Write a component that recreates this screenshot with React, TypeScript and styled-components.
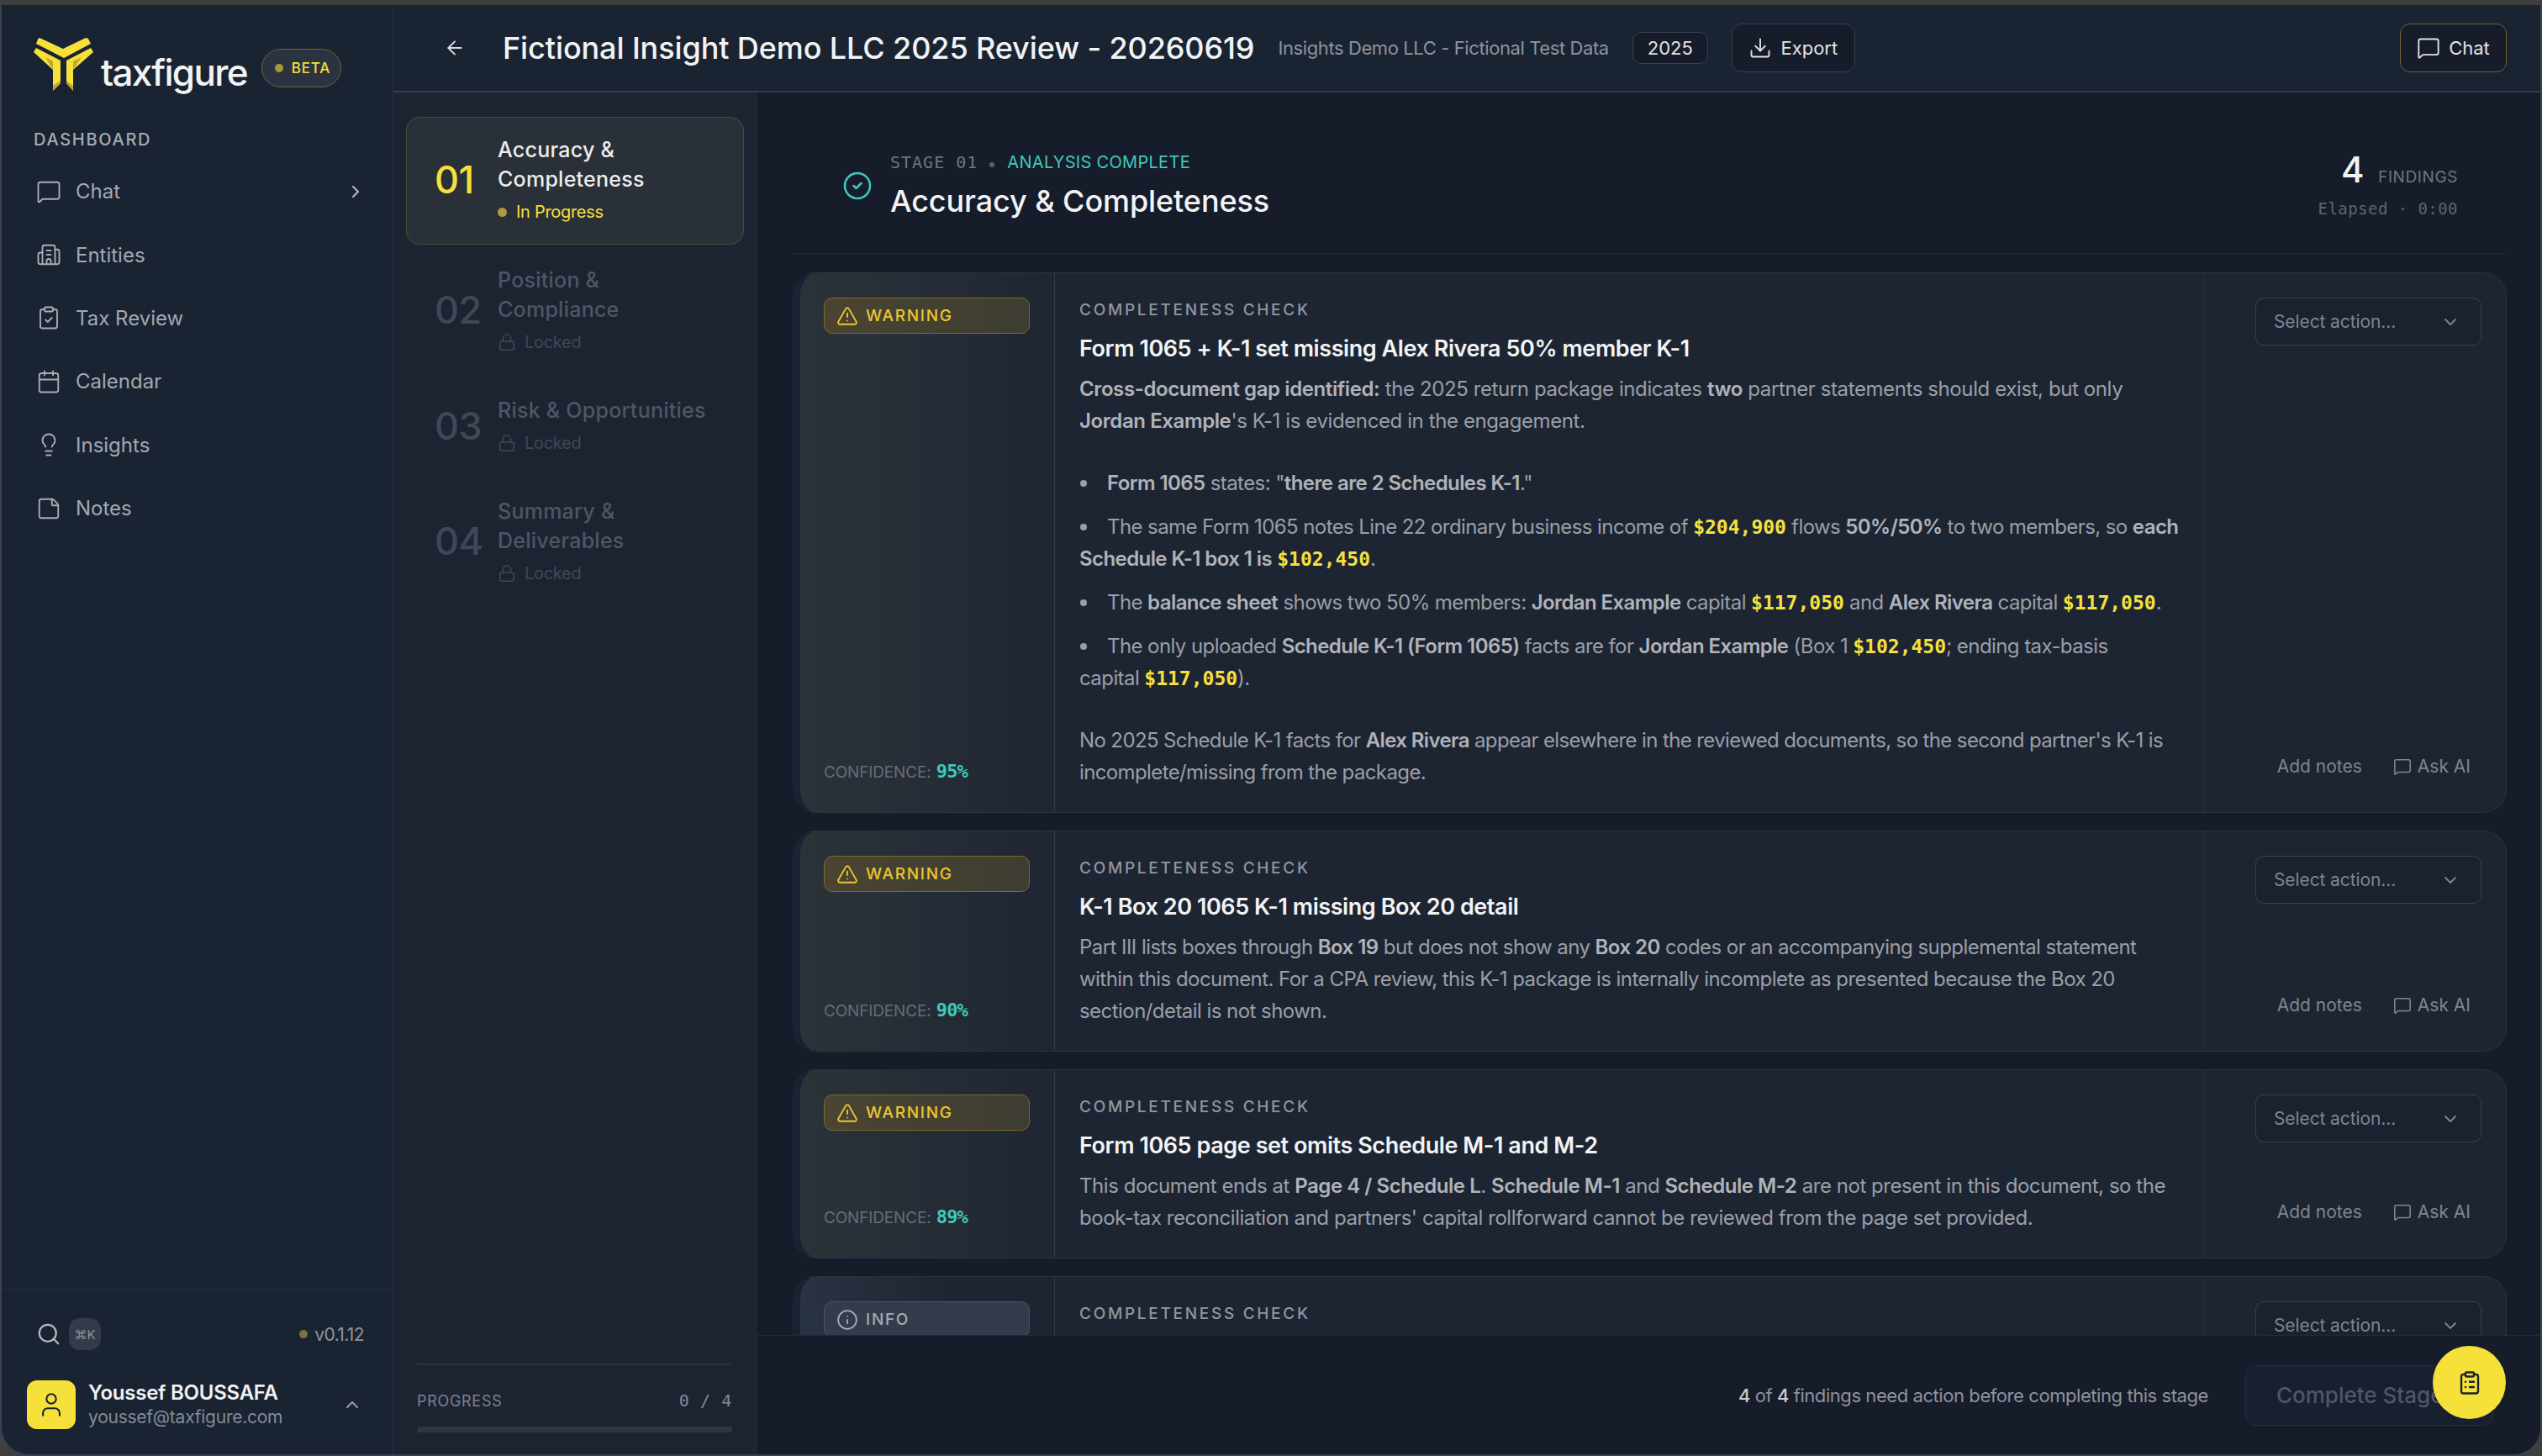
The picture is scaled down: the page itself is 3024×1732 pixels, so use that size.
import React from 'react';
import styled, { createGlobalStyle } from 'styled-components';
import {
  ArrowLeft,
  Building2,
  Calendar,
  ChevronDown,
  ChevronRight,
  ChevronUp,
  CircleCheck,
  ClipboardCheck,
  ClipboardList,
  Download,
  Info,
  Lightbulb,
  Lock,
  MessageSquare,
  Search,
  StickyNote,
  TriangleAlert,
  User,
} from 'lucide-react';

const sans = `Inter, "Liberation Sans", sans-serif`;
const mono = `"DejaVu Sans Mono", "Liberation Mono", monospace`;

const GlobalStyle = createGlobalStyle`
  html, body {
    margin: 0;
    padding: 0;
    background: #3f3f3f;
  }
  * {
    box-sizing: border-box;
  }
  body {
    font-family: ${sans};
    -webkit-font-smoothing: antialiased;
  }
`;

const navItems = [
  { label: 'Chat', icon: MessageSquare, more: true },
  { label: 'Entities', icon: Building2 },
  { label: 'Tax Review', icon: ClipboardCheck },
  { label: 'Calendar', icon: Calendar },
  { label: 'Insights', icon: Lightbulb },
  { label: 'Notes', icon: StickyNote },
];

const stages = [
  { num: '01', title: ['Accuracy &', 'Completeness'], active: true },
  { num: '02', title: ['Position &', 'Compliance'] },
  { num: '03', title: ['Risk & Opportunities'] },
  { num: '04', title: ['Summary &', 'Deliverables'] },
];

const LogoMark = styled.svg`
  flex-shrink: 0;
  margin-bottom: 14px;
`;

const Logo = () => (
  <LogoMark width="71" height="64" viewBox="0 0 71 64">
    <path d="M7 1 L35 14 L62 1 Q65 1 66 4 L68 8 L36 25 L3 8 L5 3 Q6 1 7 1 Z" fill="#f6e03a" />
    <path d="M0 18 L3 13 L32 28 L32 55 L23 64 L23 39 Z" fill="#f6e03a" />
    <path d="M71 18 L68 13 L39 28 L39 55 L47 64 L47 39 Z" fill="#f6e03a" />
    <path d="M14 24 L23 29 L23 39 Z M23 64 L23 58 L32 52 L32 55 Z" fill="#c4a52e" />
    <path d="M57 24 L47 29 L47 39 Z M47 64 L47 58 L39 52 L39 55 Z" fill="#c4a52e" />
  </LogoMark>
);

const Money = styled.span`
  font-family: ${mono};
  font-weight: 700;
  font-size: 23px;
  line-height: 0;
  letter-spacing: 0;
  color: #f7e03c;
`;

const App: React.FC<{}> = () => {
  return (
    <>
      <GlobalStyle />
      <TopStrip />
      <Shell>
        <Sidebar>
          <Brand>
            <Logo />
            <BrandName>taxfigure</BrandName>
            <BetaPill>
              <PillDot />
              BETA
            </BetaPill>
          </Brand>
          <NavLabel>DASHBOARD</NavLabel>
          <Nav>
            {navItems.map((item) => (
              <NavItem key={item.label}>
                <NavIcon>
                  <item.icon size={30} strokeWidth={1.5} />
                </NavIcon>
                {item.label}
                {item.more && (
                  <NavMore>
                    <ChevronRight size={24} strokeWidth={2} />
                  </NavMore>
                )}
              </NavItem>
            ))}
          </Nav>
          <SideFooter>
            <SearchRow>
              <Search size={30} strokeWidth={1.8} color="#b4b8bf" />
              <KeyHint>⌘K</KeyHint>
              <Version>
                <VersionDot />
                v0.1.12
              </Version>
            </SearchRow>
            <UserRow>
              <Avatar>
                <User size={34} strokeWidth={1.5} color="#1a2332" />
              </Avatar>
              <UserText>
                <UserName>Youssef BOUSSAFA</UserName>
                <UserMail>youssef@taxfigure.com</UserMail>
              </UserText>
              <ChevronUp size={24} strokeWidth={2} color="#9a9fa8" />
            </UserRow>
          </SideFooter>
        </Sidebar>

        <Content>
          <Header>
            <BackButton>
              <ArrowLeft size={26} strokeWidth={1.8} />
            </BackButton>
            <PageTitle>Fictional Insight Demo LLC 2025 Review - 20260619</PageTitle>
            <PageSub>Insights Demo LLC - Fictional Test Data</PageSub>
            <YearTag>2025</YearTag>
            <HeadButton>
              <Download size={28} strokeWidth={1.6} />
              Export
            </HeadButton>
            <ChatButton>
              <MessageSquare size={28} strokeWidth={1.6} />
              Chat
            </ChatButton>
          </Header>

          <Body>
            <Rail>
              <StageList>
                {stages.map((s) => (
                  <StageItem key={s.num} $active={s.active}>
                    <StageNum $active={s.active}>{s.num}</StageNum>
                    <div>
                      {s.title.map((line) => (
                        <StageTitle key={line} $active={s.active}>
                          {line}
                        </StageTitle>
                      ))}
                      {s.active ? (
                        <StageStatus $active>
                          <StatusDot />
                          In Progress
                        </StageStatus>
                      ) : (
                        <StageStatus>
                          <Lock size={22} strokeWidth={1.6} />
                          Locked
                        </StageStatus>
                      )}
                    </div>
                  </StageItem>
                ))}
              </StageList>
              <Progress>
                <ProgressHead>
                  <span>PROGRESS</span>
                  <ProgressCount>0 / 4</ProgressCount>
                </ProgressHead>
                <ProgressBar />
              </Progress>
            </Rail>

            <Main>
              <Scroller>
                <StageHead>
                  <CircleCheck size={36} strokeWidth={1.7} color="#3fc9bb" />
                  <StageHeadText>
                    <StageMeta>
                      STAGE 01
                      <MetaDot />
                      <MetaDone>ANALYSIS COMPLETE</MetaDone>
                    </StageMeta>
                    <StageHeading>Accuracy &amp; Completeness</StageHeading>
                  </StageHeadText>
                  <StageStats>
                    <Findings>
                      <FindingsNum>4</FindingsNum>
                      FINDINGS
                    </Findings>
                    <Elapsed>Elapsed · 0:00</Elapsed>
                  </StageStats>
                </StageHead>

                <Cards>
                  <FindingCard
                    confidence="95%"
                    title="Form 1065 + K-1 set missing Alex Rivera 50% member K-1"
                  >
                    <Para>
                      <b>Cross-document gap identified:</b> the 2025 return package indicates <b>two</b> partner
                      statements should exist, but only
                      <br />
                      <b>Jordan Example</b>'s K-1 is evidenced in the engagement.
                    </Para>
                    <Bullets>
                      <li>
                        <b>Form 1065</b> states: "<b>there are 2 Schedules K-1</b>."
                      </li>
                      <li>
                        The same Form 1065 notes Line 22 ordinary business income of <Money>$204,900</Money> flows{' '}
                        <b>50%/50%</b> to two members, so <b>each</b>
                        <br />
                        <b>Schedule K-1 box 1 is</b> <Money>$102,450</Money>.
                      </li>
                      <li>
                        The <b>balance sheet</b> shows two 50% members: <b>Jordan Example</b> capital{' '}
                        <Money>$117,050</Money> and <b>Alex Rivera</b> capital <Money>$117,050</Money>.
                      </li>
                      <li>
                        The only uploaded <b>Schedule K-1 (Form 1065)</b> facts are for <b>Jordan Example</b> (Box 1{' '}
                        <Money>$102,450</Money>; ending tax-basis
                        <br />
                        capital <Money>$117,050</Money>).
                      </li>
                    </Bullets>
                    <Para $track={-0.62}>
                      No 2025 Schedule K-1 facts for <b>Alex Rivera</b> appear elsewhere in the reviewed documents, so
                      the second partner's K-1 is
                      <br />
                      incomplete/missing from the package.
                    </Para>
                  </FindingCard>

                  <FindingCard confidence="90%" title="K-1 Box 20 1065 K-1 missing Box 20 detail">
                    <Para $track={-0.55}>
                      Part III lists boxes through <b>Box 19</b> but does not show any <b>Box 20</b> codes or an
                      accompanying supplemental statement
                      <br />
                      within this document. For a CPA review, this K-1 package is internally incomplete as presented
                      because the Box 20
                      <br />
                      section/detail is not shown.
                    </Para>
                  </FindingCard>

                  <FindingCard confidence="89%" title="Form 1065 page set omits Schedule M-1 and M-2">
                    <Para $track={-0.45}>
                      This document ends at <b>Page 4 / Schedule L</b>. <b>Schedule M-1</b> and <b>Schedule M-2</b> are
                      not present in this document, so the
                      <br />
                      book-tax reconciliation and partners' capital rollforward cannot be reviewed from the page set
                      provided.
                    </Para>
                  </FindingCard>

                  <FindingCard level="info" />
                </Cards>
              </Scroller>

              <Footer>
                <FooterNote>
                  <em>4</em> of <em>4</em> findings need action before completing this stage
                </FooterNote>
                <CompleteButton>Complete Stage</CompleteButton>
              </Footer>
              <Fab>
                <ClipboardList size={30} strokeWidth={1.9} />
              </Fab>
            </Main>
          </Body>
        </Content>
      </Shell>
    </>
  );
};

// the last card runs under the footer, only its top shows
const FindingCard: React.FC<{
  level?: 'warning' | 'info';
  confidence?: string;
  title?: string;
  children?: React.ReactNode;
}> = ({ level = 'warning', confidence, title, children }) => (
  <Card>
    <CardSide $level={level}>
      <Badge $level={level}>
        {level === 'warning' ? (
          <TriangleAlert size={26} strokeWidth={1.7} />
        ) : (
          <Info size={26} strokeWidth={1.7} />
        )}
        {level === 'warning' ? 'WARNING' : 'INFO'}
      </Badge>
      {confidence && (
        <Confidence>
          CONFIDENCE: <ConfidenceValue>{confidence}</ConfidenceValue>
        </Confidence>
      )}
    </CardSide>
    <CardMain>
      <Kicker>COMPLETENESS CHECK</Kicker>
      {title && <CardTitle>{title}</CardTitle>}
      {children}
    </CardMain>
    <CardActions>
      <ActionSelect>
        Select action...
        <ChevronDown size={24} strokeWidth={1.8} />
      </ActionSelect>
      {title && (
        <ActionLinks>
          <span>Add notes</span>
          <AskAi>
            <MessageSquare size={22} strokeWidth={1.7} />
            Ask AI
          </AskAi>
        </ActionLinks>
      )}
    </CardActions>
  </Card>
);

export default App;

const TopStrip = styled.div`
  height: 6px;
  background: #3f3f3f;
`;

const Shell = styled.div`
  display: flex;
  height: 1726px;
  overflow: hidden;
  background: #1a2332;
  border: 2px solid #3a4250;
  border-top: none;
  border-radius: 0 0 34px 34px;
`;

const Sidebar = styled.aside`
  display: flex;
  flex-direction: column;
  flex: 0 0 466px;
  border-right: 1px solid #262f3e;
`;

const Brand = styled.div`
  display: flex;
  align-items: center;
  padding: 44px 0 0 38px;
  height: 110px;
`;

const BrandName = styled.div`
  margin: 6px 0 0 9px;
  font-size: 44px;
  font-weight: 500;
  letter-spacing: -1.7px;
  color: #f2f3f4;
`;

const BetaPill = styled.div`
  display: flex;
  align-items: center;
  gap: 10px;
  width: 95px;
  height: 46px;
  margin: 0 0 4px 17px;
  padding-left: 15px;
  border: 1px solid #6b6238;
  border-radius: 23px;
  background: #2c3340;
  font-size: 17px;
  font-weight: 500;
  letter-spacing: 0.8px;
  color: #f6e03a;
`;

const PillDot = styled.span`
  width: 10px;
  height: 10px;
  border-radius: 50%;
  background: #a8983c;
`;

const NavLabel = styled.div`
  margin: 35px 0 0 38px;
  font-size: 20px;
  font-weight: 500;
  letter-spacing: 1.7px;
  line-height: 30px;
  color: #a6abb3;
`;

const Nav = styled.nav`
  display: flex;
  flex-direction: column;
  margin-top: 9px;
  padding: 0 32px 0 41px;
`;

const NavItem = styled.div`
  display: flex;
  align-items: center;
  height: 75.4px;
  font-size: 24px;
  color: #a4a9b1;
`;

const NavIcon = styled.span`
  display: flex;
  justify-content: center;
  width: 30px;
  margin-right: 17px;
  color: #a9adb5;
`;

const NavMore = styled.span`
  display: flex;
  margin-left: auto;
  color: #b9bcc3;
`;

const SideFooter = styled.div`
  margin-top: auto;
  padding: 32px 34px 30px 28px;
  border-top: 1px solid #262f3e;
`;

const SearchRow = styled.div`
  display: flex;
  align-items: center;
  gap: 9px;
  padding-left: 13px;
  height: 40px;
`;

const KeyHint = styled.span`
  display: flex;
  align-items: center;
  justify-content: center;
  width: 38px;
  height: 38px;
  border-radius: 13px;
  background: #343b48;
  font-size: 15px;
  color: #8e939c;
`;

const Version = styled.span`
  display: flex;
  align-items: center;
  gap: 8px;
  margin-left: auto;
  font-size: 21px;
  letter-spacing: -0.6px;
  color: #8f949d;
`;

const VersionDot = styled.span`
  width: 10px;
  height: 10px;
  border-radius: 50%;
  background: #80723a;
`;

const UserRow = styled.div`
  display: flex;
  align-items: center;
  gap: 15px;
  margin-top: 35px;
  padding-left: 2px;
  padding-right: 2px;
`;

const Avatar = styled.div`
  display: flex;
  align-items: center;
  justify-content: center;
  width: 58px;
  height: 58px;
  border-radius: 12px;
  background: #f6e03a;
`;

const UserText = styled.div`
  flex: 1;
`;

const UserName = styled.div`
  font-size: 24px;
  font-weight: 600;
  line-height: 30px;
  letter-spacing: -0.25px;
  color: #f1f2f3;
`;

const UserMail = styled.div`
  font-size: 21px;
  line-height: 28px;
  letter-spacing: -0.25px;
  color: #858b95;
`;

const Content = styled.div`
  display: flex;
  flex-direction: column;
  flex: 1;
  min-width: 0;
`;

const Header = styled.header`
  display: flex;
  align-items: center;
  flex: 0 0 104px;
  padding: 0 40px 0 60px;
  border-bottom: 2px solid #333c4a;
`;

const BackButton = styled.span`
  display: flex;
  margin-right: 44px;
  color: #d9dbde;
`;

const PageTitle = styled.h1`
  margin: 0;
  font-size: 36px;
  font-weight: 500;
  letter-spacing: -0.1px;
  white-space: nowrap;
  color: #f2f3f4;
`;

const PageSub = styled.span`
  margin-left: 28px;
  font-size: 22px;
  white-space: nowrap;
  letter-spacing: -0.4px;
  color: #8f949d;
`;

const YearTag = styled.span`
  display: flex;
  align-items: center;
  justify-content: center;
  width: 90px;
  height: 38px;
  margin-left: 28px;
  border: 1px solid #39424f;
  border-radius: 10px;
  background: #161c2a;
  font-size: 22px;
  color: #e2e3e6;
`;

const HeadButton = styled.button`
  display: flex;
  align-items: center;
  justify-content: center;
  gap: 10px;
  width: 147px;
  height: 58px;
  margin-left: 28px;
  padding: 0;
  border: 1px solid #39424f;
  border-radius: 12px;
  background: #161c2a;
  font-family: ${sans};
  font-size: 22px;
  color: #e2e3e6;
`;

const ChatButton = styled(HeadButton)`
  width: 127px;
  margin-left: auto;
  border-color: #6f6236;
`;

const Body = styled.div`
  display: flex;
  flex: 1;
  min-height: 0;
`;

const Rail = styled.div`
  display: flex;
  flex-direction: column;
  flex: 0 0 432px;
  padding: 29px 14px 0 15px;
  background: #1c2432;
  border-right: 1px solid #262f3e;
`;

const StageList = styled.div`
  display: flex;
  flex-direction: column;
  gap: 3px;
`;

const StageItem = styled.div<{ $active?: boolean }>`
  display: flex;
  align-items: center;
  gap: 24px;
  padding: 21px 20px 24px 33px;
  border: 1px solid ${(p) => (p.$active ? '#4d4c3a' : 'transparent')};
  border-radius: 16px;
  background: ${(p) => (p.$active ? '#2a3038' : 'transparent')};
`;

const StageNum = styled.div<{ $active?: boolean }>`
  width: 51px;
  font-size: 45px;
  font-weight: 500;
  letter-spacing: -0.5px;
  color: ${(p) => (p.$active ? '#f7e03c' : '#404756')};
`;

const StageTitle = styled.div<{ $active?: boolean }>`
  font-size: 25px;
  font-weight: 500;
  line-height: 35px;
  letter-spacing: 0.25px;
  white-space: nowrap;
  color: ${(p) => (p.$active ? '#eceded' : '#4f5664')};
`;

const StageStatus = styled.div<{ $active?: boolean }>`
  display: flex;
  align-items: center;
  gap: ${(p) => (p.$active ? '11px' : '10px')};
  height: 28px;
  margin-top: 7px;
  font-size: 20px;
  letter-spacing: -0.3px;
  color: ${(p) => (p.$active ? '#f7e03c' : '#414857')};
`;

const StatusDot = styled.span`
  width: 11px;
  height: 11px;
  border-radius: 50%;
  background: #ab9c3c;
`;

const Progress = styled.div`
  margin: auto 14px 0 13px;
  padding-top: 30px;
  height: 108px;
  border-top: 2px solid #2a3240;
`;

const ProgressHead = styled.div`
  display: flex;
  justify-content: space-between;
  align-items: center;
  font-size: 18px;
  letter-spacing: 0.7px;
  color: #7b818c;
`;

const ProgressCount = styled.span`
  font-family: ${mono};
  font-size: 20px;
  letter-spacing: 0.6px;
  color: #868b95;
`;

const ProgressBar = styled.div`
  height: 7px;
  margin-top: 19px;
  border-radius: 4px;
  background: #2f3744;
`;

const Main = styled.main`
  position: relative;
  display: flex;
  flex-direction: column;
  flex: 1;
  min-width: 0;
  background: #161c2a;
`;

const Scroller = styled.div`
  flex: 1;
  min-height: 0;
  overflow: hidden;
  padding: 0 40px 0 43px;
`;

const StageHead = styled.div`
  display: flex;
  align-items: center;
  gap: 21px;
  height: 192px;
  padding: 30px 58px 0 59px;
  border-bottom: 1px solid #232b3a;
`;

const StageHeadText = styled.div`
  flex: 1;
`;

const StageMeta = styled.div`
  display: flex;
  align-items: center;
  font-family: ${mono};
  font-size: 20px;
  line-height: 28px;
  letter-spacing: 1px;
  color: #6f7580;
`;

const MetaDot = styled.span`
  width: 6px;
  height: 6px;
  margin: 6px 15px 0 14px;
  border-radius: 50%;
  background: #596070;
`;

const MetaDone = styled.span`
  font-family: ${sans};
  font-size: 20px;
  letter-spacing: 0.3px;
  color: #3fc9bb;
`;

const StageHeading = styled.h2`
  margin: 8px 0 0;
  font-size: 36px;
  font-weight: 500;
  line-height: 48px;
  letter-spacing: -0.1px;
  color: #f2f3f4;
`;

const StageStats = styled.div`
  display: flex;
  flex-direction: column;
  align-items: flex-end;
  margin-top: -6px;
`;

const Findings = styled.div`
  display: flex;
  align-items: baseline;
  gap: 16px;
  font-size: 19px;
  letter-spacing: 0.6px;
  color: #6f7580;
`;

const FindingsNum = styled.span`
  font-size: 42px;
  font-weight: 500;
  color: #f2f3f4;
`;

const Elapsed = styled.div`
  margin-top: 10px;
  font-family: ${mono};
  font-size: 19px;
  letter-spacing: 0.45px;
  color: #5f6571;
`;

const Cards = styled.div`
  display: flex;
  flex-direction: column;
  gap: 21px;
  padding-top: 22px;
`;

const Card = styled.section`
  display: grid;
  grid-template-columns: 303px 1fr 359px;
  border: 1px solid #2b3341;
  border-left: 9px solid #1b2332;
  border-radius: 28px;
  background: #1e2532;
  overflow: hidden;
  flex-shrink: 0;
`;

const CardSide = styled.div<{ $level: string }>`
  display: flex;
  flex-direction: column;
  justify-content: space-between;
  padding: 29px 29px 33px 28px;
  background: ${(p) =>
    p.$level === 'info'
      ? 'linear-gradient(90deg, #2a3342 0%, #1e2532 60%)'
      : 'linear-gradient(90deg, #2b3339 0%, #1f2633 100%)'};
  border-right: 1px solid #323a48;
`;

const Badge = styled.div<{ $level: string }>`
  display: flex;
  align-items: center;
  gap: 9px;
  height: 43px;
  padding-left: 14px;
  border: 1px solid ${(p) => (p.$level === 'info' ? '#4a5362' : '#7a6a2c')};
  border-radius: 10px;
  background: ${(p) => (p.$level === 'info' ? '#343c4b' : 'linear-gradient(90deg, #4a4431, #3e3d33)')};
  font-size: 19px;
  font-weight: 500;
  letter-spacing: 1.7px;
  color: ${(p) => (p.$level === 'info' ? '#a6abb3' : '#eec72e')};
`;

const Confidence = styled.div`
  font-size: 19px;
  line-height: 28px;
  letter-spacing: -0.15px;
  color: #666c78;
`;

const ConfidenceValue = styled.span`
  margin-left: 1px;
  font-family: ${mono};
  font-size: 22px;
  font-weight: 700;
  line-height: 0;
  letter-spacing: -0.9px;
  color: #3fc9bb;
`;

const CardMain = styled.div`
  padding: 30px 30px 28px 29px;
  white-space: nowrap;
  min-width: 0;
`;

const Kicker = styled.div`
  font-size: 19px;
  font-weight: 500;
  line-height: 28px;
  letter-spacing: 2.7px;
  color: #9196a0;
`;

const CardTitle = styled.h3`
  margin: 14px 0 11px;
  font-size: 27px;
  font-weight: 600;
  line-height: 36px;
  letter-spacing: -0.43px;
  color: #f2f3f4;
`;

const Para = styled.p<{ $track?: number }>`
  margin: 0;
  font-size: 24px;
  line-height: 38px;
  letter-spacing: ${(p) => p.$track ?? -0.4}px;
  color: #9a9fa7;

  b {
    font-weight: 600;
    color: #b0b3ba;
  }
`;

const Bullets = styled.ul`
  display: flex;
  flex-direction: column;
  gap: 14px;
  margin: 36px 0;
  padding: 0;
  list-style: none;
  font-size: 24px;
  line-height: 38px;
  letter-spacing: -0.58px;
  color: #9a9fa7;

  b {
    font-weight: 600;
    color: #b0b3ba;
  }

  li::before {
    content: '';
    display: inline-block;
    width: 8px;
    height: 8px;
    margin: 0 24px 4px 1px;
    border-radius: 50%;
    background: #9a9fa7;
  }
`;

const CardActions = styled.div`
  display: flex;
  flex-direction: column;
  justify-content: space-between;
  padding: 29px 29px 40px 60px;
  border-left: 1px solid #262e3b;
`;

const ActionSelect = styled.div`
  display: flex;
  align-items: center;
  justify-content: space-between;
  height: 57px;
  padding: 0 24px 0 21px;
  border: 1px solid #39424f;
  border-radius: 10px;
  background: #1a2230;
  font-size: 21px;
  letter-spacing: -0.1px;
  color: #7f858f;
`;

const ActionLinks = styled.div`
  display: flex;
  align-items: center;
  justify-content: flex-end;
  gap: 37px;
  padding-right: 13px;
  line-height: 28px;
  font-size: 21px;
  color: #80868f;
`;

const AskAi = styled.span`
  display: flex;
  align-items: center;
  gap: 7px;
`;

const Footer = styled.footer`
  display: flex;
  align-items: center;
  justify-content: flex-end;
  gap: 44px;
  flex: 0 0 142px;
  padding: 0 56px 0 0;
  border-top: 1px solid #232b3a;
  background: #161c2a;
`;

const FooterNote = styled.span`
  font-size: 22px;
  letter-spacing: -0.43px;
  color: #8e939c;

  em {
    font-style: normal;
    font-weight: 500;
    color: #c9ccd1;
  }
`;

const CompleteButton = styled.button`
  width: 295px;
  height: 72px;
  padding: 0 0 0 36px;
  text-align: left;
  border: 1px solid #262e3c;
  border-radius: 12px;
  background: #182030;
  font-family: ${sans};
  font-size: 26px;
  font-weight: 500;
  color: #4f5664;
`;

const Fab = styled.div`
  position: absolute;
  right: 41px;
  bottom: 42px;
  display: flex;
  align-items: center;
  justify-content: center;
  width: 87px;
  height: 87px;
  border-radius: 50%;
  background: #f6e03a;
  color: #1a2332;
`;
